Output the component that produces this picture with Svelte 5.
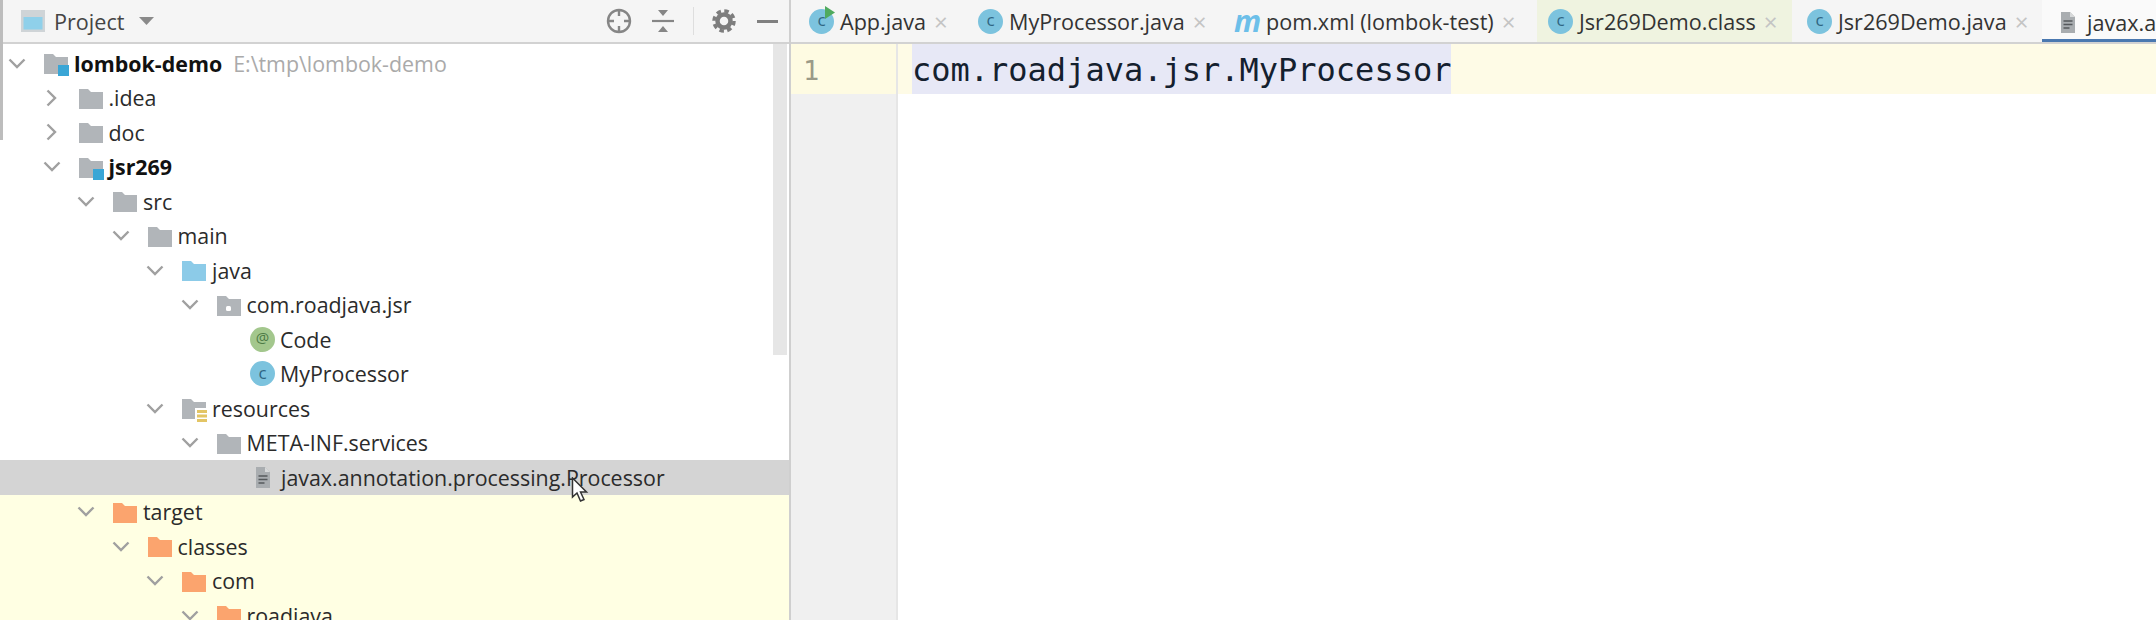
<script>
    const tabs = [
        { label: "App.java", icon: "run", width: 176, pad: 18 },
        { label: "MyProcessor.java", icon: "class", width: 256, pad: 11 },
        { label: "pom.xml (lombok-test)", icon: "maven", width: 314, pad: 11 },
        { label: "Jsr269Demo.class", icon: "class", width: 255, pad: 11, cls: "compiled" },
        { label: "Jsr269Demo.java", icon: "class", width: 250, pad: 15 },
        { label: "javax.annotation.processing.Processor", icon: "file", width: 400, pad: 7, cls: "active" }
    ];

    const rows = [
        { level: 0, arrow: "open", icon: "module", label: "lombok-demo", bold: true, hint: "E:\\tmp\\lombok-demo" },
        { level: 1, arrow: "closed", icon: "folder", label: ".idea" },
        { level: 1, arrow: "closed", icon: "folder", label: "doc" },
        { level: 1, arrow: "open", icon: "module", label: "jsr269", bold: true },
        { level: 2, arrow: "open", icon: "folder", label: "src" },
        { level: 3, arrow: "open", icon: "folder", label: "main" },
        { level: 4, arrow: "open", icon: "source", label: "java" },
        { level: 5, arrow: "open", icon: "package", label: "com.roadjava.jsr" },
        { level: 6, icon: "annotation", label: "Code" },
        { level: 6, icon: "class", label: "MyProcessor" },
        { level: 4, arrow: "open", icon: "resources", label: "resources" },
        { level: 5, arrow: "open", icon: "folder", label: "META-INF.services" },
        { level: 6, icon: "file", label: "javax.annotation.processing.Processor", state: "selected" },
        { level: 2, arrow: "open", icon: "excluded", label: "target", state: "ignored" },
        { level: 3, arrow: "open", icon: "excluded", label: "classes", state: "ignored" },
        { level: 4, arrow: "open", icon: "excluded", label: "com", state: "ignored" },
        { level: 5, arrow: "open", icon: "excluded", label: "roadjava", state: "ignored" }
    ];

    const folderIcons = ["folder", "module", "source", "package", "resources", "excluded"];
</script>

{#snippet icon(name)}
    {#if folderIcons.includes(name)}
        <svg class="ic" width="26" height="24" viewBox="0 0 26 24">
            <path class={"fold " + name} d="M1 3h9l3 3h12v17H1z" />
            {#if name === "module"}
                <rect x="15" y="14" width="11" height="11" fill="#3aa6d6" />
            {/if}
            {#if name === "package"}
                <rect x="10" y="13" width="5" height="5" rx="1.5" fill="#fff" />
            {/if}
            {#if name === "resources"}
                <rect x="14" y="12" width="13" height="17" fill="#fff" />
                <g fill="#e3c565">
                    <rect x="16" y="14" width="10" height="3" />
                    <rect x="16" y="18.500" width="10" height="3" />
                    <rect x="16" y="23" width="10" height="3" />
                </g>
            {/if}
        </svg>
    {:else if name === "class" || name === "run"}
        <span class="badge">
            c
            {#if name === "run"}
                <svg class="play" width="12" height="13" viewBox="0 0 12 13"><path d="M1 0l10 6.5L1 13z" fill="#4faa5e" /></svg>
            {/if}
        </span>
    {:else if name === "annotation"}
        <span class="badge green">@</span>
    {:else if name === "maven"}
        <span class="maven">m</span>
    {:else if name === "file"}
        <svg class="ic" width="26" height="24" viewBox="0 0 26 24">
            <path d="M6 2h9l5 5v16H6z" fill="#a9adb0" />
            <path d="M15 2l5 5h-5z" fill="#d7d9da" />
            <path d="M8.5 11h9M8.5 14.5h9M8.5 18h6" stroke="#55595c" stroke-width="1.6" />
        </svg>
    {/if}
{/snippet}

<div class="ide">
    <section class="project">
        <header class="tool">
            <svg class="win" width="26" height="24" viewBox="0 0 26 24">
                <rect x="1" y="1" width="24" height="22" fill="#cfd4d7" />
                <rect x="3.5" y="8" width="19" height="12.5" fill="#8fd0ea" />
            </svg>
            <span class="title">Project</span>
            <svg class="drop" width="15" height="8" viewBox="0 0 15 8"><path d="M0 0h15L7.500 8z" fill="#8a8a8a" /></svg>
            <span class="spring"></span>
            <svg width="26" height="26" viewBox="0 0 26 26" fill="none" stroke="#868686">
                <circle cx="13" cy="13" r="11" stroke-width="2.4" />
                <path d="M13 2v6M13 18v6M2 13h6M18 13h6" stroke-width="2.4" />
            </svg>
            <svg class="collapse" width="24" height="24" viewBox="0 0 24 24">
                <path d="M7 1h10l-5 6zM7 23h10l-5-6z" fill="#868686" />
                <path d="M1 12h22" stroke="#868686" stroke-width="2.2" />
            </svg>
            <span class="sep"></span>
            <svg class="gear" width="24" height="24" viewBox="0 0 24 24" fill="none" stroke="#7d7d7d">
                <circle cx="12" cy="12" r="6.500" stroke-width="4.500" />
                <circle cx="12" cy="12" r="10" stroke-width="3.500" stroke-dasharray="4.500 3.350" />
            </svg>
            <span class="minimize"></span>
        </header>

        <div class="tree">
            {#each rows as row}
                <div class={"row " + (row.state || "")} style="padding-left: {5 + row.level * 34.5}px">
                    <span class="arrow">
                        {#if row.arrow === "open"}
                            <svg width="18" height="11" viewBox="0 0 18 11"><path d="M1.500 1.500L9 9l7.500-7.500" /></svg>
                        {:else if row.arrow === "closed"}
                            <svg width="11" height="18" viewBox="0 0 11 18"><path d="M1.500 1.500L9 9l-7.500 7.500" /></svg>
                        {/if}
                    </span>
                    {@render icon(row.icon)}
                    <span class="name" class:bold={row.bold}>{row.label}</span>
                    {#if row.hint}
                        <span class="hint">{row.hint}</span>
                    {/if}
                </div>
            {/each}
        </div>

        <div class="thumb"></div>
        <div class="edge"></div>
        <svg class="cursor" width="18" height="26" viewBox="0 0 18 26">
            <path d="M1.500 1v19l4.500-4 3.500 8 3.500-1.500-3.500-7.500h6z" fill="#fff" stroke="#333" stroke-width="1.500" />
        </svg>
    </section>

    <section class="editor">
        <nav class="tabs">
            {#each tabs as tab}
                <div class={"tab " + (tab.cls || "")} style="width: {tab.width}px; padding-left: {tab.pad}px">
                    {@render icon(tab.icon)}
                    <span class="tab-name">{tab.label}</span>
                    {#if tab.cls !== "active"}
                        <span class="close">×</span>
                    {/if}
                </div>
            {/each}
        </nav>
        <div class="pane">
            <div class="gutter">
                <div class="num">1</div>
            </div>
            <div class="code">
                <div class="line"><span class="sel">com.roadjava.jsr.MyProcessor</span></div>
            </div>
        </div>
    </section>
</div>

<style>
    :global(body) {
        margin: 0;
        background: #fff;
    }

    .ide {
        display: flex;
        width: 2156px;
        height: 620px;
        overflow: hidden;
        font-family: "Open Sans", "Noto Sans", sans-serif;
        color: #2b2b2b;
    }

    .project {
        position: relative;
        flex: 0 0 789px;
        overflow: hidden;
        border-right: 2px solid #cfcfcf;
    }

    .tool {
        display: flex;
        align-items: center;
        box-sizing: border-box;
        height: 44px;
        padding: 0 11px 0 20px;
        background: #f5f5f5;
        border-bottom: 2px solid #d2d2d2;
    }

    .title {
        margin-left: 8px;
        font-size: 21.6px;
        color: #444;
    }

    .drop {
        margin-left: 15px;
    }

    .spring {
        flex: 1;
    }

    .collapse {
        margin-left: 19px;
    }

    .sep {
        width: 1px;
        height: 28px;
        margin: 0 18px;
        background: #dedede;
    }

    .minimize {
        width: 21px;
        height: 3px;
        margin-left: 21px;
        background: #808080;
    }

    .tree {
        padding-top: 2px;
    }

    .row {
        display: flex;
        align-items: center;
        box-sizing: border-box;
        height: 34.5px;
        font-size: 21.4px;
        white-space: nowrap;
    }

    .row.selected {
        background: #d4d4d4;
    }

    .row.ignored {
        background: #ffffe3;
    }

    .arrow {
        display: flex;
        align-items: center;
        justify-content: center;
        flex: 0 0 24px;
        margin-right: 14px;
    }

    .arrow path {
        fill: none;
        stroke: #a0a0a0;
        stroke-width: 2.4;
    }

    .name {
        margin-left: 5px;
    }

    .bold {
        font-weight: 700;
        color: #111;
    }

    .hint {
        margin-left: 11px;
        color: #aaa;
    }

    .fold {
        fill: #b1b5b9;
    }

    .fold.source {
        fill: #8ccbe8;
    }

    .fold.excluded {
        fill: #fba46e;
    }

    .ic {
        flex: none;
        overflow: visible;
    }

    .badge {
        position: relative;
        display: flex;
        align-items: center;
        justify-content: center;
        flex: none;
        box-sizing: border-box;
        width: 25px;
        height: 25px;
        padding-bottom: 3px;
        border-radius: 50%;
        background: #7cc3de;
        font-size: 17px;
        line-height: 1;
        color: #2f6683;
    }

    .badge.green {
        background: #a3c78d;
        color: #4c7a45;
        font-size: 15px;
    }

    .play {
        position: absolute;
        top: -3px;
        right: -2px;
    }

    .maven {
        flex: none;
        width: 26px;
        font-size: 30px;
        line-height: 24px;
        font-style: italic;
        font-weight: 700;
        color: #6cbfe9;
    }

    .thumb {
        position: absolute;
        top: 44px;
        right: 2px;
        width: 14px;
        height: 311px;
        background: #e6e6e6;
    }

    .edge {
        position: absolute;
        top: 0;
        left: 0;
        width: 3px;
        height: 140px;
        background: #bdbdbd;
    }

    .cursor {
        position: absolute;
        top: 477px;
        left: 571px;
    }

    .editor {
        display: flex;
        flex: 1;
        flex-direction: column;
        min-width: 0;
    }

    .tabs {
        display: flex;
        height: 44px;
        overflow: hidden;
        background: #f5f5f5;
        border-bottom: 2px solid #d2d2d2;
        box-sizing: border-box;
    }

    .tab {
        display: flex;
        align-items: center;
        flex: none;
        box-sizing: border-box;
        white-space: nowrap;
        font-size: 21.6px;
        color: #333;
    }

    .tab.compiled {
        background: #eff3e0;
    }

    .tab.active {
        background: #fafafa;
        box-shadow: inset 0 -5px 0 #4a78b0;
        margin-bottom: -2px;
    }

    .tab-name {
        margin-left: 6px;
    }

    .tab .ic {
        margin-left: 6px;
    }

    .close {
        margin-left: 8px;
        font-size: 24px;
        color: #c4c4c4;
    }

    .pane {
        display: flex;
        flex: 1;
    }

    .gutter {
        flex: 0 0 105px;
        background: #f0f0f0;
        border-right: 2px solid #e6e6e6;
    }

    .num {
        height: 50px;
        padding-left: 12px;
        background: #fefbe2;
        font-family: "DejaVu Sans Mono", monospace;
        font-size: 27px;
        line-height: 54px;
        color: #9a9a88;
    }

    .code {
        flex: 1;
    }

    .line {
        height: 50px;
        padding-left: 14px;
        background: #fefbe6;
        font-family: "DejaVu Sans Mono", monospace;
        font-size: 32px;
        line-height: 52px;
        white-space: pre;
        color: #14202e;
    }

    .sel {
        display: inline-block;
        height: 50px;
        background: #e7e8f6;
    }
</style>
